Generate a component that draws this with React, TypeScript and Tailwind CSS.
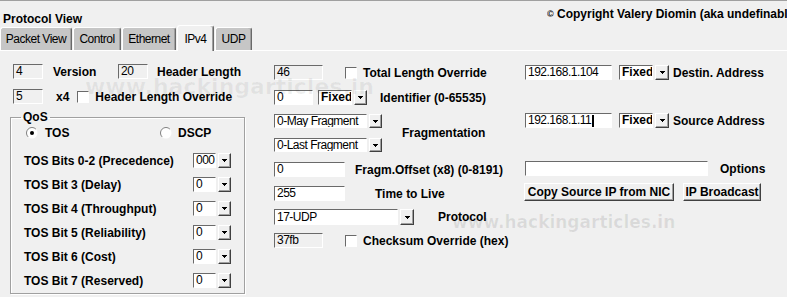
import type { ReactNode } from "react";

const sunk = "border border-t-[#6a6a6a] border-l-[#6a6a6a] border-r-white border-b-white";
const raised =
  "border border-t-white border-l-white border-r-[#404040] border-b-[#404040] shadow-[inset_-1px_-1px_0_#a0a0a0]";
const label = "text-[12px] font-bold leading-[14px] whitespace-nowrap";
const boxText = "text-[12px] leading-[13px] tracking-[-0.5px] pl-[2px] whitespace-nowrap overflow-hidden";

function Box({ w, value, gray, caret, bold }: { w: string; value?: string; gray?: boolean; caret?: boolean; bold?: boolean }) {
  return (
    <div
      className={`${w} h-full flex items-center ${sunk} ${gray ? "bg-[#f0f0f0]" : "bg-white"} ${boxText} ${
        bold ? "font-bold tracking-normal" : ""
      }`}
    >
      {value}
      {caret && <span className="ml-[1px] w-[2px] h-[12px] bg-black" />}
    </div>
  );
}

function DropBtn({ w = "w-[13px]" }: { w?: string }) {
  return (
    <div className={`${w} h-full flex items-center justify-center bg-[#f0f0f0] ${raised}`}>
      <svg width="5" height="3" viewBox="0 0 5 3">
        <path d="M0 0h5v1H0zM1 1h3v1H1zM2 2h1v1H2z" fill="#000" />
      </svg>
    </div>
  );
}

function Combo({ w, value, bold, btn }: { w: string; value: string; bold?: boolean; btn?: string }) {
  return (
    <div className="flex h-full gap-[2px]">
      <Box w={w} value={value} bold={bold} />
      <DropBtn w={btn} />
    </div>
  );
}

function Check() {
  return <div className={`w-[12px] h-[12px] bg-white ${sunk}`} />;
}

function Radio({ on }: { on?: boolean }) {
  return (
    <svg width="12" height="12" viewBox="0 0 12 12">
      <circle cx="6" cy="6" r="5.5" fill="#fff" />
      <path d="M2.1 9.9A5.5 5.5 0 0 1 9.9 2.1" fill="none" stroke="#808080" />
      {on && <circle cx="6" cy="6" r="2" fill="#000" />}
    </svg>
  );
}

function Btn({ w, children }: { w: string; children: ReactNode }) {
  return (
    <div className={`${w} h-full flex items-center justify-center bg-[#f0f0f0] ${raised} ${label}`}>{children}</div>
  );
}

function Tab({ text, w, active }: { text: string; w: string; active?: boolean }) {
  return (
    <div
      className={`${w} ${
        active ? "h-[26px] -mb-px relative z-10 bg-[#f0f0f0]" : "h-[23px] bg-[#c6c6c6]"
      } border-l border-t border-white border-r border-r-[#696969] shadow-[inset_-1px_0_0_#a0a0a0] rounded-t-[3px] flex items-center justify-center text-[12px] tracking-[-0.5px]`}
    >
      {text}
    </div>
  );
}

const tosRows = [
  ["TOS Bits 0-2 (Precedence)", "000"],
  ["TOS Bit 3 (Delay)", "0"],
  ["TOS Bit 4 (Throughput)", "0"],
  ["TOS Bit 5 (Reliability)", "0"],
  ["TOS Bit 6 (Cost)", "0"],
  ["TOS Bit 7 (Reserved)", "0"],
];

export default function App() {
  return (
    <div className="relative w-[787px] h-[297px] overflow-hidden bg-[#f0f0f0] text-black font-['Liberation_Sans',Arial,sans-serif] border-t border-[#a0a0a0]">
      {/* header */}
      <div className="flex h-[23px]">
        <div className={`w-[547px] pl-[3px] mt-[11px] ${label} leading-[12px]`}>Protocol View</div>
        <div className={`flex-1 mt-[6px] overflow-hidden ${label} leading-[12px]`}>
          <span className="text-[9px] align-top">©</span> Copyright Valery Diomin (aka undefinable)
        </div>
      </div>

      {/* tabs */}
      <div className="flex items-end h-[26px] gap-[1px]">
        <Tab text="Packet View" w="w-[72px]" />
        <Tab text="Control" w="w-[48px]" />
        <Tab text="Ethernet" w="w-[54px]" />
        <Tab text="IPv4" w="w-[37px]" active />
        <Tab text="UDP" w="w-[37px]" />
      </div>

      {/* pane */}
      <div className="flex pl-[10px] border-t border-white">
        {/* left */}
        <div className="w-[235px] pt-[13px]">
          <div className="flex items-center h-[15px] pl-[3px]">
            <Box w="w-[30px]" value="4" gray />
            <span className={`${label} ml-[10px] w-[65px]`}>Version</span>
            <Box w="w-[30px]" value="20" gray />
            <span className={`${label} ml-[9px]`}>Header Length</span>
          </div>
          <div className="flex items-center h-[15px] pl-[3px] mt-[10px]">
            <Box w="w-[30px]" value="5" gray />
            <span className={`${label} ml-[13px]`}>x4</span>
            <div className="ml-[8px]">
              <Check />
            </div>
            <span className={`${label} ml-[6px]`}>Header Length Override</span>
          </div>

          <fieldset className="mt-[6px] w-[235px] border border-[#a0a0a0] shadow-[inset_1px_1px_0_#fff,1px_1px_0_#fff] pb-[5px]">
            <legend className={`${label} ml-[10px] px-[2px]`}>QoS</legend>
            <div className="flex items-center h-[14px] mt-[2px] pl-[15px]">
              <div className="flex items-center w-[134px]">
                <Radio on />
                <span className={`${label} ml-[7px]`}>TOS</span>
              </div>
              <Radio />
              <span className={`${label} ml-[6px]`}>DSCP</span>
            </div>
            <div className="flex flex-col gap-[9px] mt-[13px] pl-[13px]">
              {tosRows.map(([t, v]) => (
                <div key={t} className="flex items-center h-[15px]">
                  <span className={`${label} w-[169px]`}>{t}</span>
                  <Combo w="w-[23px]" value={v} />
                </div>
              ))}
            </div>
          </fieldset>
        </div>

        {/* middle */}
        <div className="w-[251px] ml-[29px] pt-[14px]">
          <div className="flex items-center h-[15px]">
            <Box w="w-[49px]" value="46" gray />
            <div className="ml-[22px]">
              <Check />
            </div>
            <span className={`${label} ml-[6px]`}>Total Length Override</span>
          </div>
          <div className="flex items-center h-[15px] mt-[10px]">
            <Box w="w-[39px]" value="0" />
            <div className="ml-[5px] h-full">
              <Combo w="w-[34px]" value="Fixed" bold />
            </div>
            <span className={`${label} ml-[13px]`}>Identifier (0-65535)</span>
          </div>
          <div className="flex items-center mt-[9px]">
            <div className="flex flex-col gap-[10px]">
              <div className="h-[14px]">
                <Combo w="w-[93px]" value="0-May Fragment" />
              </div>
              <div className="h-[14px]">
                <Combo w="w-[93px]" value="0-Last Fragment" />
              </div>
            </div>
            <span className={`${label} ml-[20px]`}>Fragmentation</span>
          </div>
          <div className="flex items-center h-[15px] mt-[10px]">
            <Box w="w-[71px]" value="0" />
            <span className={`${label} ml-[10px]`}>Fragm.Offset (x8) (0-8191)</span>
          </div>
          <div className="flex items-center h-[15px] mt-[9px]">
            <Box w="w-[71px]" value="255" />
            <span className={`${label} ml-[30px]`}>Time to Live</span>
          </div>
          <div className="flex items-center h-[16px] mt-[8px]">
            <Combo w="w-[124px]" value="17-UDP" btn="w-[14px]" />
            <span className={`${label} ml-[24px]`}>Protocol</span>
          </div>
          <div className="flex items-center h-[15px] mt-[8px]">
            <Box w="w-[49px]" value="37fb" gray />
            <div className="ml-[22px]">
              <Check />
            </div>
            <span className={`${label} ml-[6px]`}>Checksum Override (hex)</span>
          </div>
        </div>

        {/* right */}
        <div className="flex-1 pt-[14px]">
          <div className="flex items-center h-[15px]">
            <Box w="w-[87px]" value="192.168.1.104" />
            <div className="ml-[7px] h-full">
              <Combo w="w-[34px]" value="Fixed" bold btn="w-[14px]" />
            </div>
            <span className={`${label} ml-[4px]`}>Destin. Address</span>
          </div>
          <div className="flex items-center h-[15px] mt-[33px]">
            <Box w="w-[87px]" value="192.168.1.11" caret />
            <div className="ml-[7px] h-full">
              <Combo w="w-[34px]" value="Fixed" bold btn="w-[14px]" />
            </div>
            <span className={`${label} ml-[4px]`}>Source Address</span>
          </div>
          <div className="flex items-center h-[15px] mt-[33px]">
            <Box w="w-[183px]" />
            <span className={`${label} ml-[12px]`}>Options</span>
          </div>
          <div className="flex items-center h-[18px] mt-[7px] -ml-px gap-[9px]">
            <Btn w="w-[150px]">Copy Source IP from NIC</Btn>
            <Btn w="w-[78px]">IP Broadcast</Btn>
          </div>
        </div>
      </div>

      {/* watermark */}
      <span className="absolute left-[85px] top-[75px] text-[22px] leading-[22px] font-bold font-['DejaVu_Sans',sans-serif] text-black/[0.06] pointer-events-none whitespace-nowrap">
        www.hackingarticles.in
      </span>
      <span className="absolute left-[452px] top-[213px] text-[17px] leading-[17px] font-bold font-['DejaVu_Sans',sans-serif] text-black/[0.09] pointer-events-none whitespace-nowrap">
        www.hackingarticles.in
      </span>
    </div>
  );
}
